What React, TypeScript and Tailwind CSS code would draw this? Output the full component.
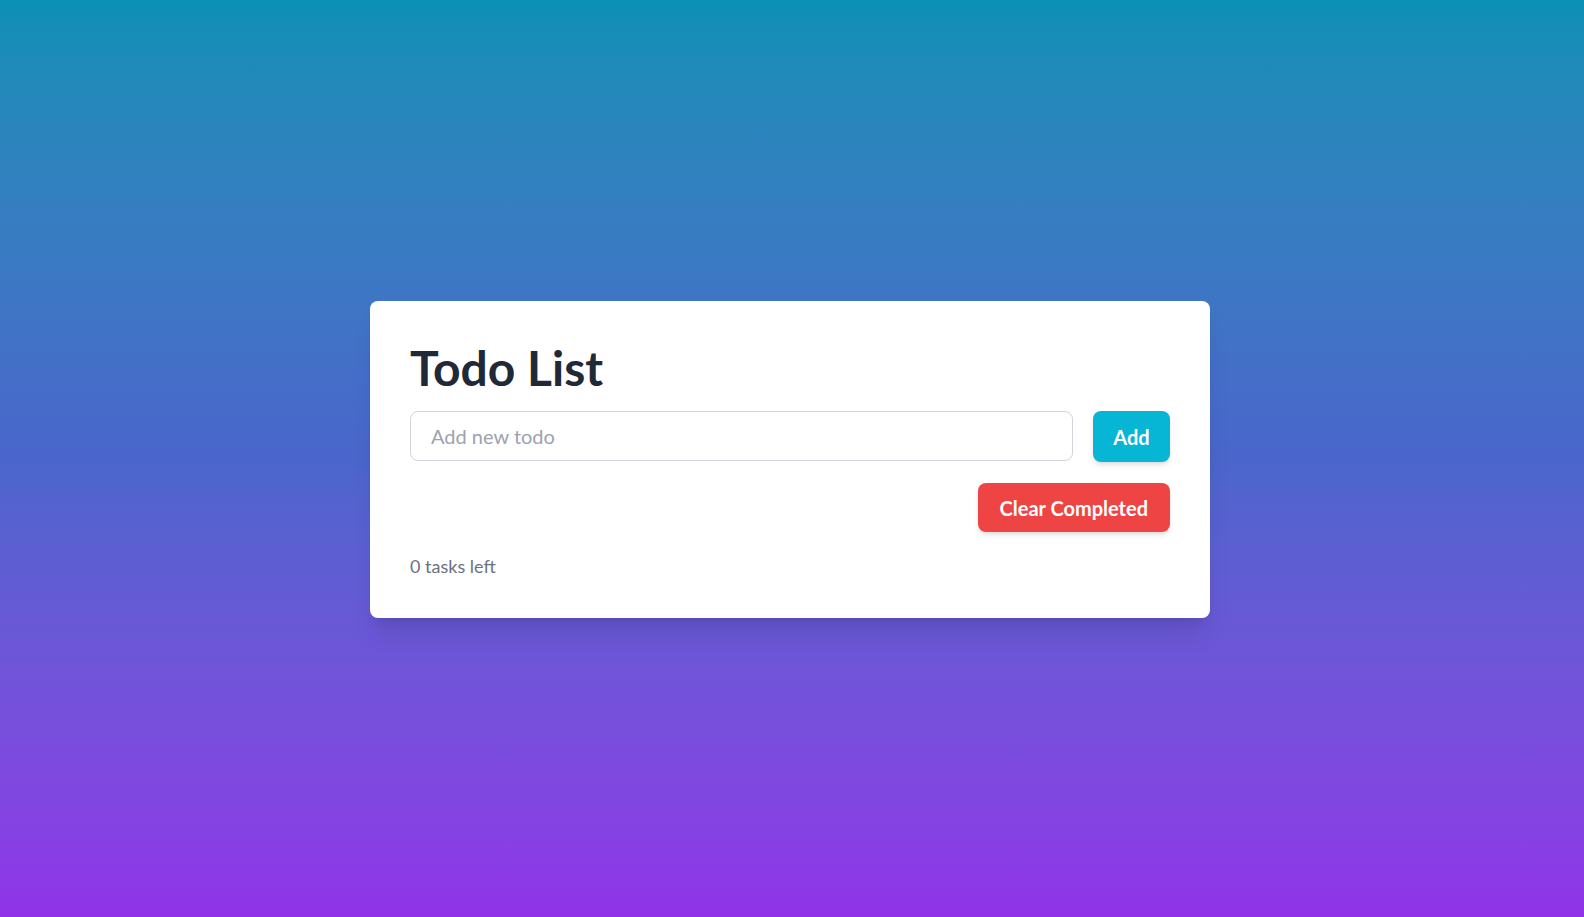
import React, { useState } from 'react';

interface Todo {
    id: number;
    text: string;
    done: boolean;
}

export default function App() {
    const [todos, setTodos] = useState<Todo[]>([]);
    const [text, setText] = useState('');

    const addTodo = () => {
        if (!text.trim()) return;
        setTodos([...todos, { id: Date.now(), text: text.trim(), done: false }]);
        setText('');
    };

    const clearCompleted = () => setTodos(todos.filter(t => !t.done));
    const left = todos.filter(t => !t.done).length;

    return (
        <div
            className="min-h-screen flex items-center justify-center pr-1 pt-[2px] bg-gradient-to-b from-[#0a90b6] via-[#4a66cc] to-[#9033e8]"
            style={{ fontFamily: 'Lato, "Noto Sans", sans-serif' }}
        >
            <div className="w-[840px] bg-white rounded-lg shadow-xl px-10 pt-10 pb-[38px]">
                <h1 className="text-5xl leading-none font-bold text-[#1f2937] pt-[3px] mb-[19px]">Todo List</h1>

                {/* Input row */}
                <div className="flex gap-5">
                    <input
                        type="text"
                        placeholder="Add new todo"
                        value={text}
                        onChange={(e) => setText(e.target.value)}
                        onKeyDown={(e) => e.key === 'Enter' && addTodo()}
                        className="flex-1 h-[50px] px-5 text-xl text-[#1f2937] placeholder-[#9ca3af] border border-[#d1d5db] rounded-lg focus:outline-none"
                    />
                    <button
                        onClick={addTodo}
                        className="h-[51px] w-[77px] bg-[#06b6d4] text-white text-xl font-bold rounded-lg shadow-md"
                    >
                        Add
                    </button>
                </div>

                {todos.length > 0 && (
                    <ul className="mt-4 divide-y divide-gray-200">
                        {todos.map((todo) => (
                            <li key={todo.id} className="py-2 flex items-center gap-3 text-lg">
                                <input
                                    type="checkbox"
                                    checked={todo.done}
                                    onChange={() => setTodos(todos.map(t => t.id === todo.id ? { ...t, done: !t.done } : t))}
                                />
                                <span className={todo.done ? 'line-through text-gray-400' : 'text-gray-800'}>{todo.text}</span>
                            </li>
                        ))}
                    </ul>
                )}

                <div className="flex justify-end mt-[21px]">
                    <button
                        onClick={clearCompleted}
                        className="h-[49px] px-[22px] bg-[#ef4444] text-white text-xl font-bold rounded-lg shadow-md"
                    >
                        Clear Completed
                    </button>
                </div>

                <p className="mt-5 text-lg text-[#6b7280]">{left} tasks left</p>
            </div>
        </div>
    );
}
